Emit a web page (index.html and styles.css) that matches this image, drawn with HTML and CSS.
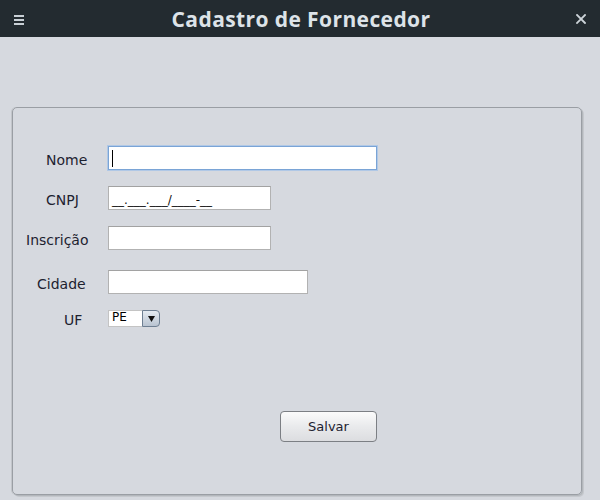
FILE: index.html
```html
<!DOCTYPE html>
<html lang="pt">
<head>
<meta charset="utf-8">
<title>Cadastro de Fornecedor</title>
<link rel="stylesheet" href="styles.css">
</head>
<body>
<header class="titlebar">
  <span class="menu-icon"><i></i><i></i><i></i></span>
  <h1 class="title">Cadastro de Fornecedor</h1>
  <svg class="close-icon" width="10" height="10" viewBox="0 0 10 10"><path d="M1 1 L9 9 M9 1 L1 9" stroke="#cdd4d9" stroke-width="1.8" stroke-linecap="square"/></svg>
</header>
<main class="content">
  <section class="panel">
    <div class="row row-nome">
      <label class="lbl lbl-nome">Nome</label>
      <div class="field field-focus"><span class="caret"></span></div>
    </div>
    <div class="row row-cnpj">
      <label class="lbl lbl-cnpj">CNPJ</label>
      <div class="field field-cnpj"><span class="mask">__.___.___/____-__</span></div>
    </div>
    <div class="row row-insc">
      <label class="lbl lbl-insc">Inscrição</label>
      <div class="field field-insc"></div>
    </div>
    <div class="row row-cidade">
      <label class="lbl lbl-cidade">Cidade</label>
      <div class="field field-cidade"></div>
    </div>
    <div class="row row-uf">
      <label class="lbl lbl-uf">UF</label>
      <div class="combo"><span class="combo-text">PE</span><span class="combo-btn"><svg width="7" height="6" viewBox="0 0 7 6"><path d="M0 0 H7 L3.5 6 Z" fill="#111"/></svg></span></div>
    </div>
    <div class="actions">
      <button class="btn">Salvar</button>
    </div>
  </section>
</main>
</body>
</html>
```
FILE: styles.css
```css
html, body {
  margin: 0;
  padding: 0;
}
body {
  width: 600px;
  height: 500px;
  background: #d6d9df;
  font-family: "DejaVu Sans", sans-serif;
  overflow: hidden;
}
.titlebar {
  height: 37px;
  background: #232b30;
  display: flex;
  align-items: center;
  justify-content: space-between;
  padding: 0 14px;
  box-sizing: border-box;
}
.menu-icon {
  display: flex;
  flex-direction: column;
  gap: 2px;
  width: 10px;
  margin-top: 2px;
}
.menu-icon i {
  display: block;
  height: 2px;
  background: #c9d0d6;
}
.title {
  margin: 0;
  font-family: "Open Sans", sans-serif;
  font-weight: 700;
  font-size: 21px;
  color: #dde3e8;
  letter-spacing: 0.4px;
  margin-left: 2px;
}
.close-icon {
  display: block;
  margin-top: 1px;
}
.content {
  padding: 70px 18px 0 12px;
}
.panel {
  width: 570px;
  height: 388px;
  box-sizing: border-box;
  border: 1px solid #9a9ea4;
  border-radius: 5px;
  box-shadow: 1px 1px 0 #b3b7bc, 2px 2px 0 #c5c8cd, -1px 0 0 #c2c5ca;
  display: flex;
  flex-direction: column;
  padding-top: 37px;
}
.row {
  display: flex;
  align-items: center;
}
.lbl {
  box-sizing: border-box;
  width: 95px;
  font-size: 14px;
  line-height: 17px;
  color: #1d2230;
  padding-top: 4px;
}
.lbl-nome { padding-left: 33px; }
.lbl-cnpj { padding-left: 33px; }
.lbl-insc { padding-left: 13px; }
.lbl-cidade { padding-left: 24px; }
.lbl-uf { padding-left: 51px; padding-top: 2px; }
.row-nome { height: 26px; }
.row-cnpj { margin-top: 15px; }
.row-insc { margin-top: 16px; }
.row-cidade { margin-top: 20px; }
.row-uf { margin-top: 16px; align-items: flex-start; }
.field {
  box-sizing: border-box;
  height: 24px;
  background: #fff;
  border: 1px solid #b2b2b2;
  border-top-color: #a2a2a2;
  display: flex;
  align-items: center;
  padding-left: 3px;
}
.field-focus {
  width: 269px;
  height: 24px;
  border: 1px solid #7aa4d6;
  box-shadow: 0 0 0 1px #b0c8e6;
}
.caret {
  display: block;
  width: 1px;
  height: 17px;
  background: #000;
}
.field-cnpj { width: 163px; }
.field-insc { width: 163px; }
.field-cidade { width: 200px; }
.mask {
  font-family: "DejaVu Sans", sans-serif;
  font-size: 12px;
  color: #111;
  padding-top: 3px;
}
.combo {
  display: flex;
  width: 52px;
  height: 17px;
  box-sizing: border-box;
}
.combo-text {
  flex: 1;
  background: #fff;
  border: 1px solid #c4c4c4;
  border-right: none;
  font-size: 12px;
  color: #000;
  padding-left: 3px;
  line-height: 13px;
}
.combo-btn {
  width: 18px;
  box-sizing: border-box;
  border: 1px solid #6e7f92;
  border-radius: 0 4px 4px 0;
  background: linear-gradient(#e4eaf1, #b9c4d1);
  display: flex;
  align-items: center;
  justify-content: center;
}
.combo-btn svg { display: block; }
.actions {
  display: flex;
  justify-content: flex-start;
  padding-left: 267px;
  margin-top: 82px;
}
.btn {
  width: 97px;
  height: 31px;
  border: 1px solid #7c7f84;
  border-radius: 4px;
  background: linear-gradient(#fbfbfb, #e9eaec 50%, #dcdde0);
  font-family: "DejaVu Sans", sans-serif;
  font-size: 13px;
  color: #1d2230;
  padding: 0;
}
```
